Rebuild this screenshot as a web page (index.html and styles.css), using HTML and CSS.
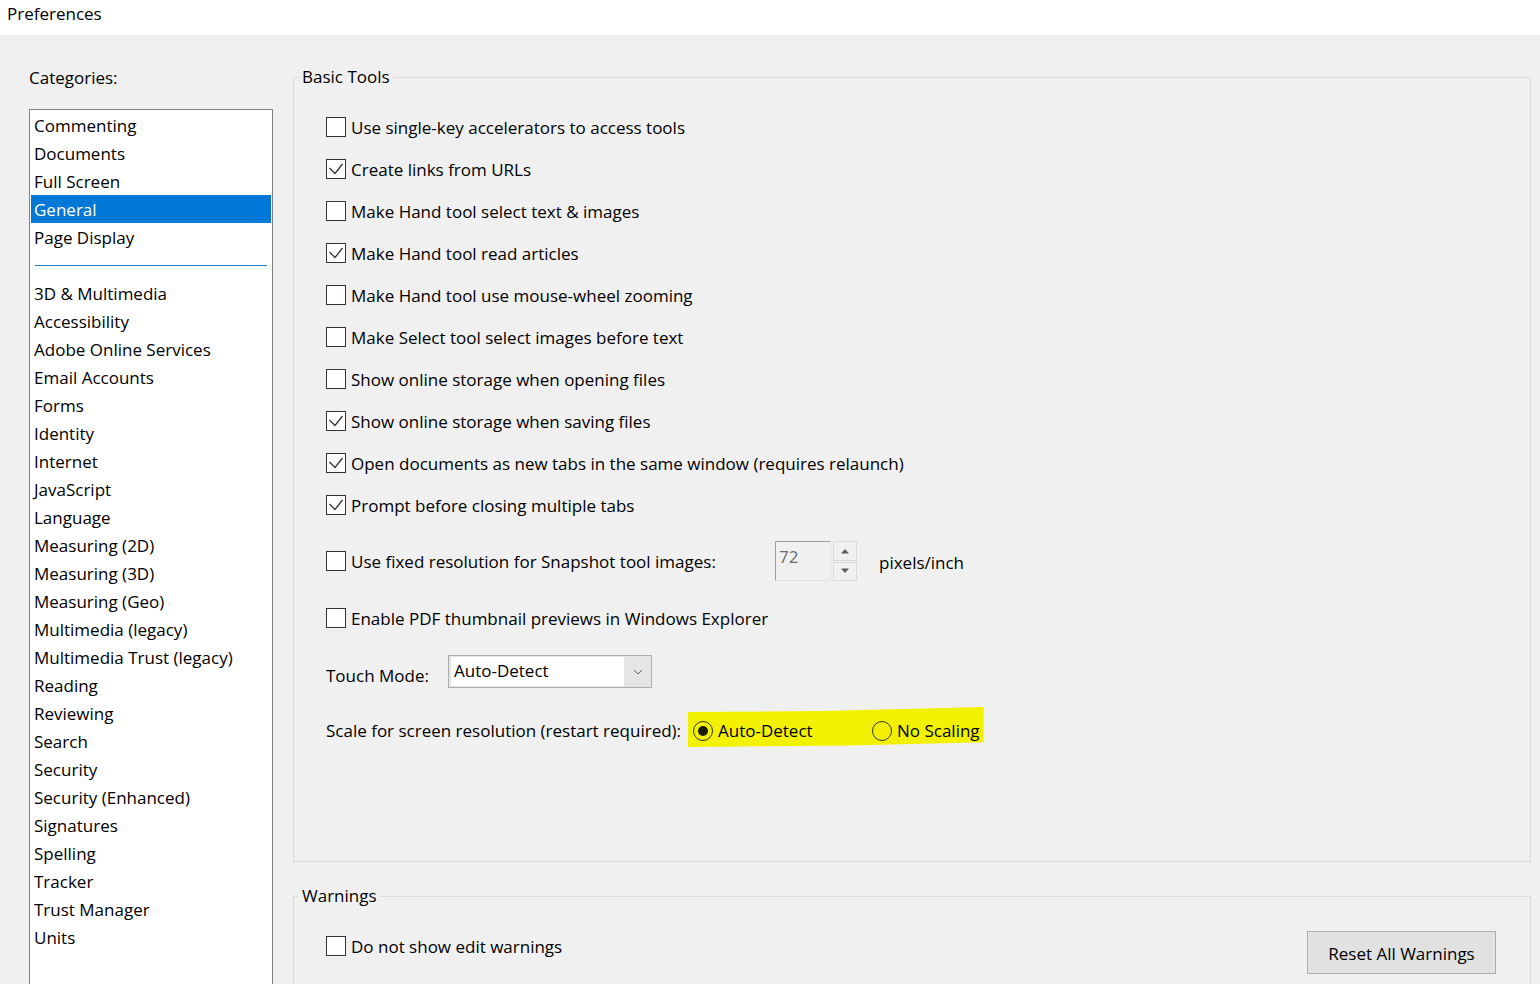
FILE: index.html
```
<!DOCTYPE html>
<html>
<head>
<meta charset="utf-8">
<title>Preferences</title>
<link rel="stylesheet" href="styles.css">
</head>
<body>
<div class="titlebar">Preferences</div>
<div class="main">
  <div class="leftcol">
    <div class="cat-label">Categories:</div>
    <ul class="catlist">
      <li>Commenting</li>
      <li>Documents</li>
      <li>Full Screen</li>
      <li class="selected">General</li>
      <li>Page Display</li>
      <li class="sep"><span></span></li>
      <li>3D &amp; Multimedia</li>
      <li>Accessibility</li>
      <li>Adobe Online Services</li>
      <li>Email Accounts</li>
      <li>Forms</li>
      <li>Identity</li>
      <li>Internet</li>
      <li>JavaScript</li>
      <li>Language</li>
      <li>Measuring (2D)</li>
      <li>Measuring (3D)</li>
      <li>Measuring (Geo)</li>
      <li>Multimedia (legacy)</li>
      <li>Multimedia Trust (legacy)</li>
      <li>Reading</li>
      <li>Reviewing</li>
      <li>Search</li>
      <li>Security</li>
      <li>Security (Enhanced)</li>
      <li>Signatures</li>
      <li>Spelling</li>
      <li>Tracker</li>
      <li>Trust Manager</li>
      <li>Units</li>
    </ul>
  </div>
  <div class="rightcol">
    <fieldset class="group basic">
      <legend>Basic Tools</legend>
      <div class="content">
        <div class="row"><span class="cb"></span><span class="txt">Use single-key accelerators to access tools</span></div>
        <div class="row"><span class="cb checked"><svg viewBox="0 0 18 18"><polyline points="2.5,8 8,13.5 15.5,4"/></svg></span><span class="txt">Create links from URLs</span></div>
        <div class="row"><span class="cb"></span><span class="txt">Make Hand tool select text &amp; images</span></div>
        <div class="row"><span class="cb checked"><svg viewBox="0 0 18 18"><polyline points="2.5,8 8,13.5 15.5,4"/></svg></span><span class="txt">Make Hand tool read articles</span></div>
        <div class="row"><span class="cb"></span><span class="txt">Make Hand tool use mouse-wheel zooming</span></div>
        <div class="row"><span class="cb"></span><span class="txt">Make Select tool select images before text</span></div>
        <div class="row"><span class="cb"></span><span class="txt">Show online storage when opening files</span></div>
        <div class="row"><span class="cb checked"><svg viewBox="0 0 18 18"><polyline points="2.5,8 8,13.5 15.5,4"/></svg></span><span class="txt">Show online storage when saving files</span></div>
        <div class="row"><span class="cb checked"><svg viewBox="0 0 18 18"><polyline points="2.5,8 8,13.5 15.5,4"/></svg></span><span class="txt">Open documents as new tabs in the same window (requires relaunch)</span></div>
        <div class="row"><span class="cb checked"><svg viewBox="0 0 18 18"><polyline points="2.5,8 8,13.5 15.5,4"/></svg></span><span class="txt">Prompt before closing multiple tabs</span></div>
        <div class="row snap">
          <div class="snap-label"><span class="cb"></span><span class="txt">Use fixed resolution for Snapshot tool images:</span></div>
          <div class="spin-input">72</div>
          <div class="spin-btns">
            <div class="spin-btn"><svg viewBox="0 0 10 6"><polygon points="1,5.5 9,5.5 5,1"/></svg></div>
            <div class="spin-btn"><svg viewBox="0 0 10 6"><polygon points="1,0.5 9,0.5 5,5"/></svg></div>
          </div>
          <span class="unit">pixels/inch</span>
        </div>
        <div class="row enable"><span class="cb"></span><span class="txt">Enable PDF thumbnail previews in Windows Explorer</span></div>
        <div class="touch">
          <span class="touch-label">Touch Mode:</span>
          <div class="dropdown">
            <div class="dd-value">Auto-Detect</div>
            <div class="dd-arrow"><svg viewBox="0 0 10 6"><polyline points="1,1 5,5 9,1"/></svg></div>
          </div>
        </div>
        <div class="scale">
          <span class="scale-label">Scale for screen resolution (restart required):</span>
          <span class="highlight">
            <span class="opt first"><span class="radio on"></span><span class="rtxt">Auto-Detect</span></span>
            <span class="opt"><span class="radio"></span><span class="rtxt">No Scaling</span></span>
          </span>
        </div>
      </div>
    </fieldset>
    <fieldset class="group warnings">
      <legend>Warnings</legend>
      <div class="warn-row">
        <div class="row-inline"><span class="cb"></span><span class="txt">Do not show edit warnings</span></div>
        <button class="btn">Reset All Warnings</button>
      </div>
    </fieldset>
  </div>
</div>
</body>
</html>
```
FILE: styles.css
```
html, body {
  margin: 0;
  padding: 0;
}
body {
  width: 1540px;
  height: 984px;
  overflow: hidden;
  background: #f0f0f0;
  font-family: "Open Sans", "Noto Sans", sans-serif;
  font-size: 17px;
  color: #000;
}
.titlebar {
  height: 35px;
  background: #fff;
  line-height: 28px;
  padding-left: 7px;
  box-sizing: border-box;
}
.main {
  display: flex;
  gap: 20px;
  padding: 30px 0 0 29px;
}
.leftcol {
  width: 244px;
  flex: none;
  display: flex;
  flex-direction: column;
}
.cat-label {
  line-height: 24px;
  padding-top: 1px;
}
.catlist {
  list-style: none;
  margin: 19px 0 0;
  padding: 1px;
  height: 900px;
  background: #fff;
  border: 1px solid #828282;
}
.catlist li {
  height: 28px;
  line-height: 30px;
  padding-left: 3px;
  white-space: nowrap;
  overflow: hidden;
}
.catlist li.selected {
  background: #0078d7;
  color: #fff;
}
.catlist li.sep {
  display: flex;
  align-items: center;
  padding: 0 4px 0 4px;
}
.catlist li.sep span {
  flex: 1;
  height: 1px;
  background: #1c7cc9;
}
.rightcol {
  width: 1238px;
  flex: none;
}
.group {
  margin: 0;
  padding: 0;
  min-width: 0;
  border: 1px solid #dcdcdc;
  box-sizing: border-box;
}
.group legend {
  margin-left: 5px;
  padding: 0 3px;
  line-height: 24px;
}
.basic {
  height: 797px;
}
.content {
  padding: 17px 0 0 32px;
}
.row {
  display: flex;
  align-items: center;
  height: 42px;
  line-height: 24px;
  white-space: nowrap;
}
.txt {
  padding-top: 2px;
  line-height: 24px;
}
.cb {
  width: 20px;
  height: 20px;
  box-sizing: border-box;
  border: 1px solid #333;
  background: #fff;
  margin-right: 5px;
  flex: none;
  display: flex;
  align-items: center;
  justify-content: center;
}
.cb svg {
  width: 18px;
  height: 18px;
  fill: none;
  stroke: #333;
  stroke-width: 1.3;
}
.snap {
  margin-top: 15px;
  height: 40px;
}
.snap-label {
  display: flex;
  align-items: center;
  width: 449px;
  flex: none;
}
.spin-input {
  width: 56px;
  height: 40px;
  box-sizing: border-box;
  border: 1px solid #e3e3e3;
  border-top-color: #a0a0a0;
  border-left-color: #a0a0a0;
  background: #f0f0f0;
  color: #6d6d6d;
  padding: 3px 0 0 3px;
  line-height: 24px;
  align-self: stretch;
}
.spin-btns {
  margin-left: 2px;
  width: 24px;
  height: 40px;
  display: flex;
  flex-direction: column;
  gap: 1px;
}
.spin-btn {
  flex: 1;
  border: 1px solid #dadada;
  background: #f0f0f0;
  display: flex;
  align-items: center;
  justify-content: center;
}
.spin-btn svg {
  width: 10px;
  height: 6px;
  fill: #5d5d5d;
}
.unit {
  margin-left: 22px;
  margin-top: 4px;
}
.enable {
  margin-top: 16px;
}
.touch {
  display: flex;
  align-items: flex-start;
  margin-top: 16px;
  height: 32px;
}
.touch-label {
  width: 122px;
  flex: none;
  line-height: 24px;
  margin-top: 9px;
}
.dropdown {
  width: 204px;
  height: 33px;
  box-sizing: border-box;
  border: 1px solid #adadad;
  background: #e5e5e5;
  display: flex;
  padding: 2px 0 2px 2px;
}
.dd-value {
  width: 173px;
  background: #fff;
  padding-left: 3px;
  line-height: 28px;
  box-sizing: border-box;
  margin-top: -1px;
  height: 29px;
}
.dd-arrow {
  flex: 1;
  display: flex;
  align-items: center;
  justify-content: center;
  padding-left: 1px;
}
.dd-arrow svg {
  width: 10px;
  height: 6px;
  fill: none;
  stroke: #606060;
  stroke-width: 1;
}
.scale {
  display: flex;
  align-items: flex-start;
  margin-top: 32px;
  height: 24px;
  line-height: 24px;
  white-space: nowrap;
}
.scale-label {
  width: 362px;
  flex: none;
}
.rtxt {
  line-height: 24px;
}
.highlight {
  display: inline-flex;
  align-items: center;
  margin-top: -12px;
  padding: 12px 4px 4px 5px;
  background: #f2f200;
  clip-path: polygon(0 5px, 45% 4px, 100% 0, 100% 88%, 55% 96%, 0 100%);
}
.opt {
  display: inline-flex;
  align-items: center;
}
.opt.first {
  width: 179px;
}
.radio {
  width: 20px;
  height: 20px;
  box-sizing: border-box;
  border: 1px solid #333;
  border-radius: 50%;
  margin-right: 5px;
  position: relative;
  flex: none;
}
.radio.on::after {
  content: "";
  position: absolute;
  left: 4px;
  top: 4px;
  width: 10px;
  height: 10px;
  border-radius: 50%;
  background: #1a1a00;
}
.warnings {
  margin-top: 22px;
  height: 200px;
}
.warn-row {
  display: flex;
  justify-content: space-between;
  align-items: flex-start;
  padding: 23px 34px 0 32px;
}
.row-inline {
  display: flex;
  align-items: center;
  line-height: 24px;
  margin-top: 2px;
}
.btn {
  width: 189px;
  height: 43px;
  box-sizing: border-box;
  border: 1px solid #adadad;
  background: #e1e1e1;
  font-family: inherit;
  font-size: 17px;
  color: #000;
  padding: 0;
  line-height: 24px;
  padding-top: 3px;
}
```
